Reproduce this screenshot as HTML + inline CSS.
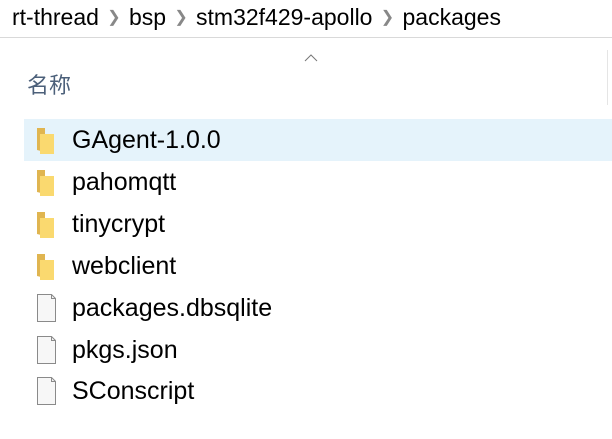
<!DOCTYPE html>
<html><head><style>
body{margin:0;width:612px;height:439px;background:#fff;font-family:"Liberation Sans","Noto Sans CJK SC",sans-serif;position:relative;overflow:hidden;color:#000}
.bc{position:absolute;top:4px;left:12px;font-size:23px;white-space:nowrap}
.bc span.s{display:inline-block;width:30px;text-align:center;color:#888;font-size:16px;vertical-align:3px}
.line{position:absolute;top:37px;left:0;width:612px;height:1px;background:#d9d9d9}
.caret{position:absolute;left:304px;top:54px}
.hdr{position:absolute;left:27px;top:68px;font-size:22px;color:#4c607a}
.vl{position:absolute;left:607px;top:50px;width:1px;height:55px;background:#e5e5e5}
.row{position:absolute;left:24px;width:588px;height:42px}
.sel{background:#e5f3fb}
.row .t{position:absolute;left:48px;top:7px;font-size:25px}
.row svg{position:absolute;left:12px;top:8px}
</style></head><body>
<div class="bc">rt-thread<span class="s">&#x276F;</span>bsp<span class="s">&#x276F;</span>stm32f429-apollo<span class="s">&#x276F;</span>packages</div>
<div class="line"></div>
<svg class="caret" width="14" height="8"><path d="M1 7L7 1L13 7" fill="none" stroke="#777" stroke-width="1"/></svg>
<div class="hdr">名称</div>
<div class="vl"></div>
<div class="row sel" style="top:119px"><svg width="20" height="28"><path d="M1 1h8v24l-8 -2z" fill="#e0b550"/><path d="M4 7h14v20H4z" fill="#fad96f"/></svg><div class="t">GAgent-1.0.0</div></div>
<div class="row" style="top:161px"><svg width="20" height="28"><path d="M1 1h8v24l-8 -2z" fill="#e0b550"/><path d="M4 7h14v20H4z" fill="#fad96f"/></svg><div class="t">pahomqtt</div></div>
<div class="row" style="top:203px"><svg width="20" height="28"><path d="M1 1h8v24l-8 -2z" fill="#e0b550"/><path d="M4 7h14v20H4z" fill="#fad96f"/></svg><div class="t">tinycrypt</div></div>
<div class="row" style="top:245px"><svg width="20" height="28"><path d="M1 1h8v24l-8 -2z" fill="#e0b550"/><path d="M4 7h14v20H4z" fill="#fad96f"/></svg><div class="t">webclient</div></div>
<div class="row" style="top:287px"><svg width="22" height="31" style="top:6px"><path d="M1.5 1.5h14l4 4v23h-18z" fill="#f7f7f7" stroke="#8a8a8a"/><path d="M15.5 1.5v4h4" fill="none" stroke="#8a8a8a"/></svg><div class="t">packages.dbsqlite</div></div>
<div class="row" style="top:329px"><svg width="22" height="31" style="top:6px"><path d="M1.5 1.5h14l4 4v23h-18z" fill="#f7f7f7" stroke="#8a8a8a"/><path d="M15.5 1.5v4h4" fill="none" stroke="#8a8a8a"/></svg><div class="t">pkgs.json</div></div>
<div class="row" style="top:370px"><svg width="22" height="31" style="top:6px"><path d="M1.5 1.5h14l4 4v23h-18z" fill="#f7f7f7" stroke="#8a8a8a"/><path d="M15.5 1.5v4h4" fill="none" stroke="#8a8a8a"/></svg><div class="t">SConscript</div></div>
</body></html>
